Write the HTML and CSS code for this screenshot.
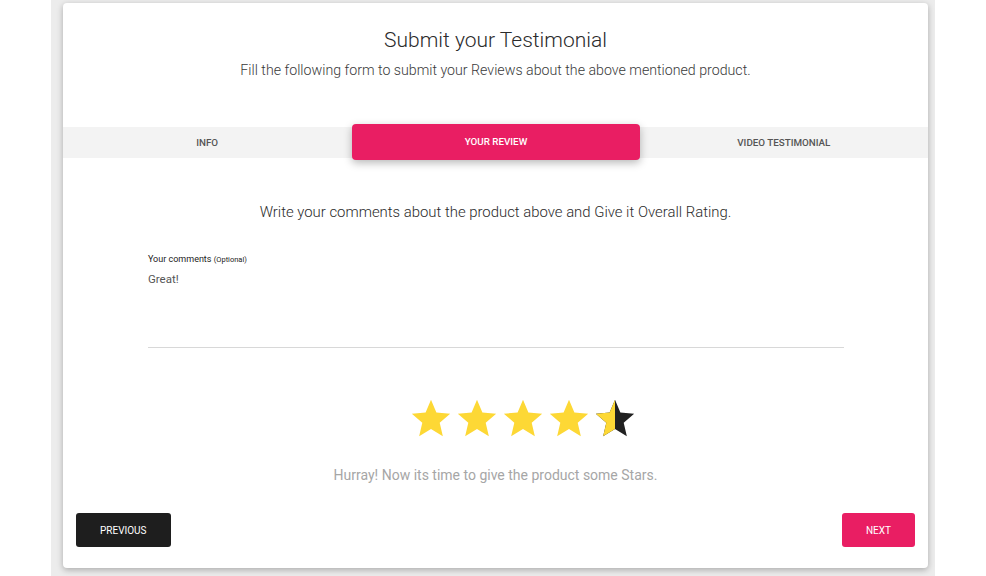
FILE: index.html
```html
<!DOCTYPE html>
<html>
<head>
<meta charset="utf-8">
<link rel="stylesheet" href="styles.css">
</head>
<body>
<div class="page">
  <div class="card">
    <header class="head">
      <h1 class="title">Submit your Testimonial</h1>
      <p class="subtitle">Fill the following form to submit your Reviews about the above mentioned product.</p>
    </header>
    <nav class="tabs">
      <div class="tab">INFO</div>
      <div class="tab active">YOUR REVIEW</div>
      <div class="tab">VIDEO TESTIMONIAL</div>
    </nav>
    <p class="prompt">Write your comments about the product above and Give it Overall Rating.</p>
    <div class="field">
      <div class="label">Your comments <span class="opt">(Optional)</span></div>
      <div class="input">Great!</div>
    </div>
    <div class="stars">
      <svg class="star" viewBox="0 0 24 24"><path class="y" d="M12 17.27L18.18 21l-1.64-7.03L22 9.24l-7.19-.61L12 2 9.19 8.63 2 9.24l5.46 4.73L5.82 21z"/></svg>
      <svg class="star" viewBox="0 0 24 24"><path class="y" d="M12 17.27L18.18 21l-1.64-7.03L22 9.24l-7.19-.61L12 2 9.19 8.63 2 9.24l5.46 4.73L5.82 21z"/></svg>
      <svg class="star" viewBox="0 0 24 24"><path class="y" d="M12 17.27L18.18 21l-1.64-7.03L22 9.24l-7.19-.61L12 2 9.19 8.63 2 9.24l5.46 4.73L5.82 21z"/></svg>
      <svg class="star" viewBox="0 0 24 24"><path class="y" d="M12 17.27L18.18 21l-1.64-7.03L22 9.24l-7.19-.61L12 2 9.19 8.63 2 9.24l5.46 4.73L5.82 21z"/></svg>
      <svg class="star" viewBox="0 0 24 24">
        <defs><clipPath id="half"><rect x="0" y="0" width="12" height="24"/></clipPath></defs>
        <path class="d" d="M12 17.27L18.18 21l-1.64-7.03L22 9.24l-7.19-.61L12 2 9.19 8.63 2 9.24l5.46 4.73L5.82 21z"/>
        <path class="y" clip-path="url(#half)" d="M12 17.27L18.18 21l-1.64-7.03L22 9.24l-7.19-.61L12 2 9.19 8.63 2 9.24l5.46 4.73L5.82 21z"/>
      </svg>
    </div>
    <p class="hint">Hurray! Now its time to give the product some Stars.</p>
    <div class="actions">
      <button class="btn prev">PREVIOUS</button>
      <button class="btn next">NEXT</button>
    </div>
  </div>
</div>
</body>
</html>
```
FILE: styles.css
```css
html, body {
  margin: 0;
  padding: 0;
  background: #ffffff;
  font-family: Roboto, "Liberation Sans", sans-serif;
}
.page {
  margin-left: 51px;
  width: 884px;
  height: 576px;
  box-sizing: border-box;
  background: #ececec;
  padding: 3px 7px 0 12px;
  overflow: hidden;
}
.card {
  background: #ffffff;
  height: 565px;
  border-radius: 4px;
  box-shadow: 0 2px 6px rgba(0, 0, 0, 0.28);
  display: flex;
  flex-direction: column;
  box-sizing: border-box;
  padding-bottom: 21px;
}
.head {
  padding-top: 23px;
  text-align: center;
}
.title {
  margin: 0;
  font-size: 21px;
  line-height: 28px;
  font-weight: 300;
  color: #2b2b2b;
}
.subtitle {
  margin: 6px 0 0;
  font-size: 14.2px;
  line-height: 20px;
  font-weight: 300;
  color: #3a3a3a;
}
.tabs {
  margin-top: 47px;
  height: 31px;
  background: #f3f3f3;
  display: grid;
  grid-template-columns: 1fr 1fr 1fr;
  align-items: center;
}
.tab {
  text-align: center;
  font-size: 9.8px;
  font-weight: 500;
  color: #555555;
  line-height: 31px;
}
.tab.active {
  background: #e91e63;
  color: #ffffff;
  border-radius: 4px;
  line-height: 36px;
  margin: -3px 0 -2px 1px;
  box-shadow: 0 3px 8px rgba(0, 0, 0, 0.28);
  position: relative;
}
.prompt {
  margin: 43px 0 0;
  text-align: center;
  font-size: 14.9px;
  line-height: 22px;
  font-weight: 300;
  color: #2b2b2b;
}
.field {
  margin: 29px 84px 0 85px;
  border-bottom: 1px solid #d8d8d8;
}
.label {
  font-size: 9px;
  line-height: 14px;
  color: #222222;
}
.opt {
  font-size: 7.5px;
}
.input {
  margin-top: 3px;
  height: 77px;
  font-size: 11.5px;
  line-height: 18px;
  color: #555555;
}
.stars {
  margin-top: 48px;
  display: flex;
  justify-content: center;
  padding-left: 55px;
}
.star {
  width: 46px;
  height: 46px;
  display: block;
}
.star .y { fill: #fdd835; }
.star .d { fill: #212121; }
.hint {
  margin: 23px 0 0;
  text-align: center;
  font-size: 14px;
  line-height: 20px;
  color: #a6a6a6;
}
.actions {
  margin-top: auto;
  display: flex;
  justify-content: space-between;
  padding: 0 13px;
}
.btn {
  height: 34px;
  padding: 0 24px;
  border: none;
  border-radius: 3px;
  font-family: Roboto, "Liberation Sans", sans-serif;
  font-size: 10px;
  color: #ffffff;
  cursor: pointer;
}
.btn.prev { background: #1e1e1e; }
.btn.next { background: #e91e63; }
```
